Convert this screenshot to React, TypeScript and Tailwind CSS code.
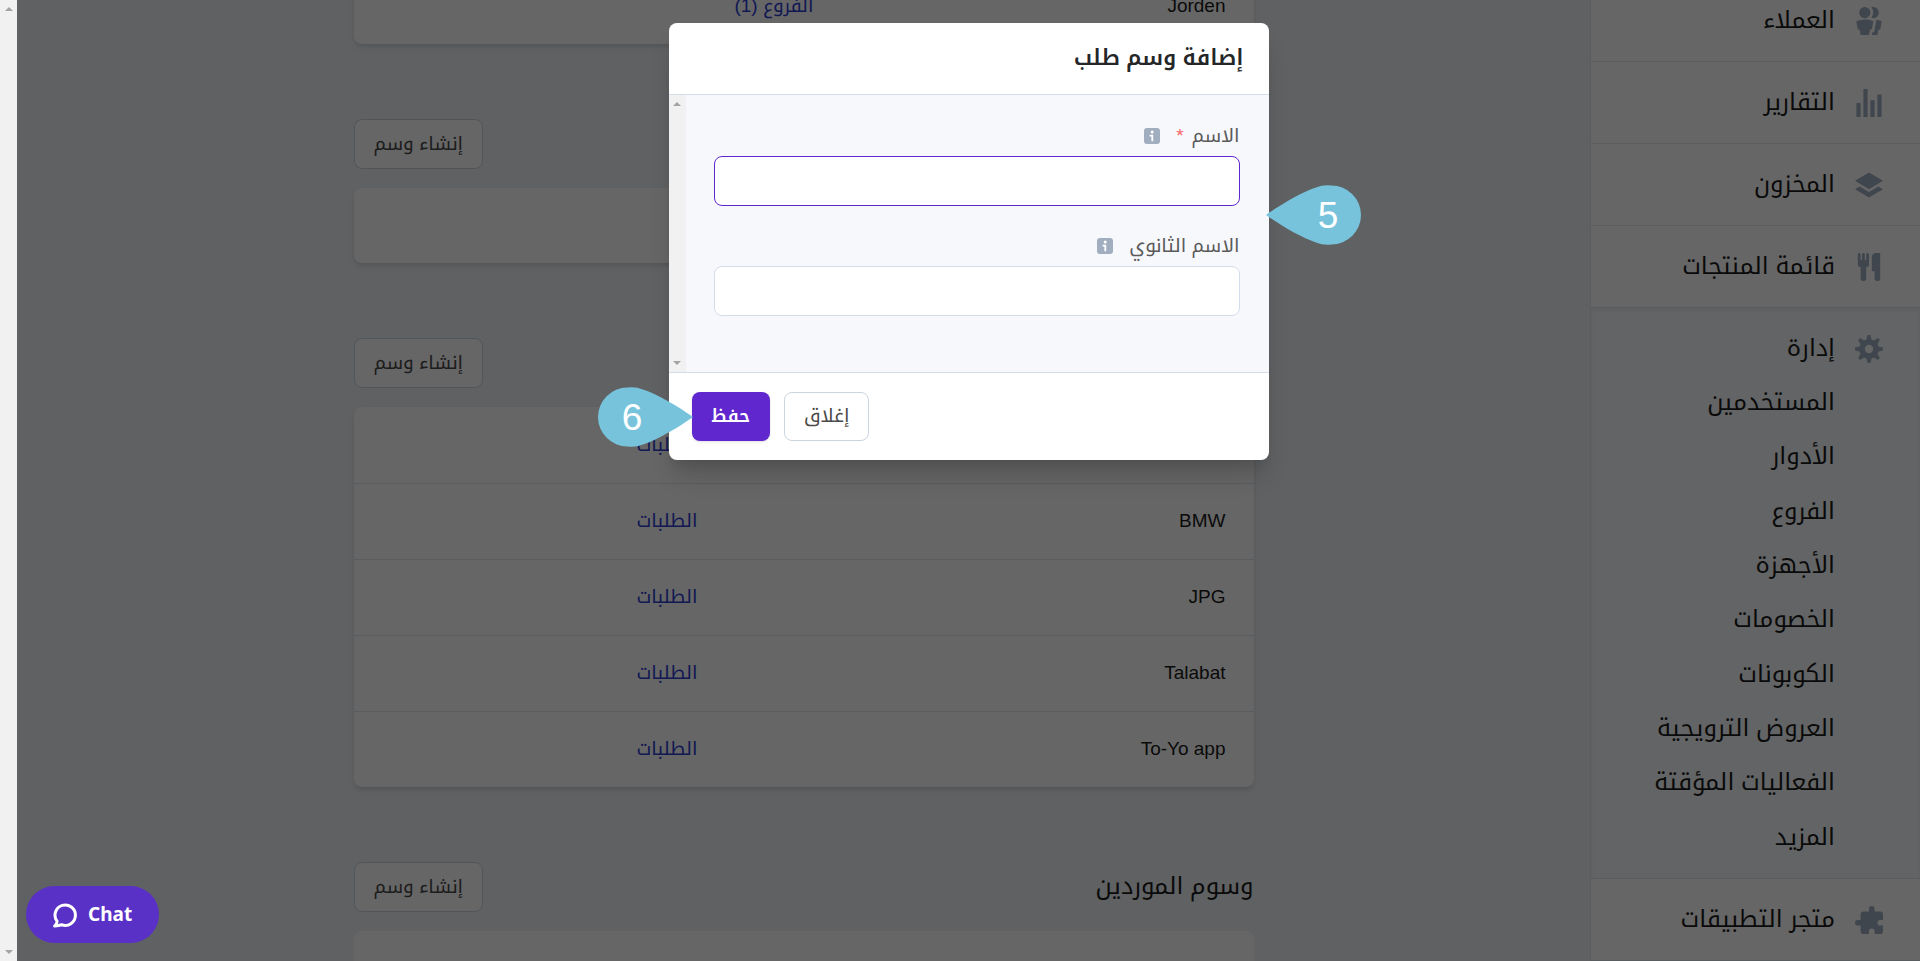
import { useId } from "react";

const kufi = "font-['Liberation_Sans','Noto_Kufi_Arabic',sans-serif]";

const icons = {
  customers:
    "M7 8a4 4 0 1 1 0-8 4 4 0 0 1 0 8zm0 1c2.15 0 4.2.4 6.1 1.09L12 16h-1.25L10 20H4l-.75-4H2L.9 10.09A17.93 17.93 0 0 1 7 9zm8.31.17c1.32.18 2.59.48 3.8.92L18 16h-1.25L16 20h-3.96l.37-2h1.25l1.65-8.83zM13 0a4 4 0 1 1-1.33 7.76 5.96 5.96 0 0 0 0-7.52C12.1.1 12.53 0 13 0z",
  reports: "M1 10h3v10H1V10zM6 0h3v20H6V0zm5 8h3v12h-3V8zm5-4h3v16h-3V4z",
  inventory: "M10 1l10 6-10 6L0 7l10-6zm6.67 10L20 13l-10 6-10-6 3.33-2L10 15l6.67-4z",
  menu: "M18 11v7a2 2 0 0 1-4 0v-5h-2V3a3 3 0 0 1 3-3h3v11zM4 10a2 2 0 0 1-2-2V1a1 1 0 0 1 2 0v4h1V1a1 1 0 0 1 2 0v4h1V1a1 1 0 0 1 2 0v7a2 2 0 0 1-2 2v8a2 2 0 0 1-4 0v-8z",
  manage:
    "M3.94 6.5L2.22 3.64l1.42-1.42L6.5 3.94c.52-.3 1.1-.54 1.7-.7L9 0h2l.8 3.24c.6.16 1.18.4 1.7.7l2.86-1.72 1.42 1.42-1.72 2.86c.3.52.54 1.1.7 1.7L20 9v2l-3.24.8c-.16.6-.4 1.18-.7 1.7l1.72 2.86-1.42 1.42-2.86-1.72c-.52.3-1.1.54-1.7.7L11 20H9l-.8-3.24c-.6-.16-1.18-.4-1.7-.7l-2.86 1.72-1.42-1.42 1.72-2.86c-.3-.52-.54-1.1-.7-1.7L0 11V9l3.24-.8c.16-.6.4-1.18.7-1.7zM10 13a3 3 0 1 0 0-6 3 3 0 0 0 0 6z",
  apps: "M20 14v4a2 2 0 0 1-2 2h-4v-2a2 2 0 0 0-2-2 2 2 0 0 0-2 2v2H6a2 2 0 0 1-2-2v-4H2a2 2 0 0 1-2-2 2 2 0 0 1 2-2h2V6c0-1.1.9-2 2-2h4V2a2 2 0 0 1 2-2 2 2 0 0 1 2 2v2h4a2 2 0 0 1 2 2v4h-2a2 2 0 0 0-2 2 2 2 0 0 0 2 2h2z",
};

type IconName = keyof typeof icons;

const topItems: { label: string; icon: IconName }[] = [
  { label: "العملاء", icon: "customers" },
  { label: "التقارير", icon: "reports" },
  { label: "المخزون", icon: "inventory" },
  { label: "قائمة المنتجات", icon: "menu" },
];

const manageItems = [
  "المستخدمين",
  "الأدوار",
  "الفروع",
  "الأجهزة",
  "الخصومات",
  "الكوبونات",
  "العروض الترويجية",
  "الفعاليات المؤقتة",
  "المزيد",
];

function NavLink({ label, icon }: { label: string; icon: IconName }) {
  return (
    <a href="#" className="flex h-[81px] items-center gap-5 pr-[37px]">
      <svg viewBox="0 0 20 20" className="size-7 shrink-0 fill-[#a0aec0]" aria-hidden="true">
        <path fillRule="evenodd" d={icons[icon]} />
      </svg>
      <span className="pb-0.5 leading-10">{label}</span>
    </a>
  );
}

function Sidebar() {
  return (
    <nav className="w-[330px] shrink-0 border-l border-[#e2e8f0] bg-white text-[24px] text-[#1a1a1a]">
      <ul className="-mt-5">
        {topItems.map((item) => (
          <li key={item.label} className="border-b border-[#e2e8f0]">
            <NavLink {...item} />
          </li>
        ))}
        <li className="border-b border-[#e2e8f0] bg-[#f7fafc] pb-3.5 shadow-[inset_0_2px_4px_rgba(0,0,0,0.06)]">
          <NavLink label="إدارة" icon="manage" />
          <ul className="-mt-3.5 flex h-[489px] flex-col">
            {manageItems.map((label) => (
              <li key={label} className="flex flex-1 items-center pr-[85px]">
                <a href="#" className="leading-10">{label}</a>
              </li>
            ))}
          </ul>
        </li>
        <li className="border-b border-[#e2e8f0]">
          <NavLink label="متجر التطبيقات" icon="apps" />
        </li>
      </ul>
    </nav>
  );
}

type Row = { name: string; link: string };

function TagTable({ rows, nameWidth = "w-[528px]" }: { rows: Row[]; nameWidth?: string }) {
  return (
    <div className="overflow-hidden rounded-lg bg-white shadow-[0_4px_6px_-1px_rgba(0,0,0,0.1),0_2px_4px_-1px_rgba(0,0,0,0.06)]">
      <table className="w-full border-collapse text-[19px]">
        <tbody>
          {rows.map((row, i) => (
            <tr key={i} className="h-[76px] border-b border-[#e2e8f0] last:border-b-0">
              <td className={`${nameWidth} px-7 text-[#1a1a1a]`}>{row.name}</td>
              <td className="px-7">
                <a href="#" className="text-[#2d3ed0]">{row.link}</a>
              </td>
            </tr>
          ))}
        </tbody>
      </table>
    </div>
  );
}

function SectionHeader({ title }: { title?: string }) {
  return (
    <header className="mt-[75px] mb-[19px] flex h-[50px] items-center justify-between">
      <h2 className="pb-0.5 text-[24px] leading-10 text-[#1a1a1a]">{title}</h2>
      <button
        type="button"
        className="h-full rounded-lg border border-[#cbd5e0] bg-white px-[19px] text-[19px] text-[#4a4a4a]"
      >
        إنشاء وسم
      </button>
    </header>
  );
}

function Arrow({ down = false }: { down?: boolean }) {
  return (
    <svg viewBox="0 0 8 4" className="h-1 w-2 fill-[#a3a3a3]" aria-hidden="true">
      <path d={down ? "M0 0h8L4 4z" : "M0 4h8L4 0z"} />
    </svg>
  );
}

function Field({ label, required = false }: { label: string; required?: boolean }) {
  const id = useId();
  return (
    <div>
      <div className="flex h-[41px] items-center gap-4 text-[19px] text-[#5a5a5a]">
        <label htmlFor={id} className="leading-8">
          {label}
          {required && <span className="mr-2 text-[#f56565]">*</span>}
        </label>
        <svg viewBox="0 0 16 16" className="size-4" aria-hidden="true">
          <rect width="16" height="16" rx="3" fill="#a0aec0" />
          <circle cx="8.2" cy="4" r="1.5" fill="#fff" />
          <path d="M5.6 6.8h3.6v6.4H7.4V8.6H5.6z" fill="#fff" />
        </svg>
      </div>
      <input
        id={id}
        type="text"
        className={`h-[50px] w-full rounded-lg border bg-white px-4 text-[19px] outline-none ${
          required ? "border-[#5f27cd]" : "border-[#d5dcea]"
        }`}
      />
    </div>
  );
}

function Pin({ number, flip = false }: { number: number; flip?: boolean }) {
  return (
    <svg viewBox="0 0 95 60" className="h-[60px] w-[95px]" aria-hidden="true">
      <g transform={flip ? "translate(95 0) scale(-1 1)" : undefined}>
        <path
          d="M0 30C14 20 36 7 50 2.500A29.500 29.500 0 0 1 65.500 0.500A29.500 29.500 0 0 1 65.500 59.500A29.500 29.500 0 0 1 50 57.500C36 53 14 40 0 30z"
          fill="#78c3dc"
        />
      </g>
      <text
        x={flip ? 34 : 62}
        y="43"
        textAnchor="middle"
        fontSize="37"
        fill="#fff"
        fontFamily="Liberation Sans, sans-serif"
      >
        {number}
      </text>
    </svg>
  );
}

function TagDialog() {
  return (
    <div
      role="dialog"
      aria-modal="true"
      aria-labelledby="dialog-title"
      className="relative mt-[23px] w-[600px] rounded-lg bg-white shadow-[0_20px_25px_-5px_rgba(0,0,0,0.16),0_10px_10px_-5px_rgba(0,0,0,0.08)]"
    >
      <header className="flex h-[72px] items-center border-b border-[#d5dcea] px-[25px] pb-0.5">
        <h1 id="dialog-title" className="text-[22px] leading-9 font-semibold text-[#242628]">
          إضافة وسم طلب
        </h1>
      </header>
      <div className="flex h-[277px] bg-[#f7f8fc]">
        <form className="flex flex-1 flex-col gap-[19px] pt-5 pr-[29px] pl-7">
          <Field label="الاسم" required />
          <Field label="الاسم الثانوي" />
        </form>
        <div className="flex w-[17px] flex-col items-center justify-between bg-[#f1f1f1] py-[7px]">
          <Arrow />
          <Arrow down />
        </div>
      </div>
      <footer className="flex h-[88px] items-center justify-end gap-3.5 border-t border-[#d5dcea] px-[23px] text-[19px]">
        <button type="button" className="h-[49px] rounded-lg border border-[#cbd5e0] bg-white px-[19px] text-[#4a4a4a]">
          إغلاق
        </button>
        <button type="button" className="h-[49px] rounded-lg bg-[#5f27cd] px-5 text-[18px] font-semibold text-white shadow-sm">
          حفظ
        </button>
      </footer>
      <div className="absolute top-[162px] -right-[92px]">
        <Pin number={5} />
      </div>
      <div className="absolute top-[364px] -left-[71px]">
        <Pin number={6} flip />
      </div>
    </div>
  );
}

export default function App() {
  return (
    <div dir="rtl" className={`relative flex h-screen overflow-hidden bg-[#edf2f7] ${kufi}`}>
      <Sidebar />
      <main className="flex-1">
        <div className="mx-auto -mt-8 w-[900px]">
          <TagTable nameWidth="w-[412px]" rows={[{ name: "Jorden", link: "الفروع (1)" }]} />
          <SectionHeader />
          <div className="h-[75px] rounded-lg bg-white shadow-[0_4px_6px_-1px_rgba(0,0,0,0.1),0_2px_4px_-1px_rgba(0,0,0,0.06)]" />
          <SectionHeader />
          <TagTable
            rows={[
              { name: "", link: "الطلبات" },
              { name: "BMW", link: "الطلبات" },
              { name: "JPG", link: "الطلبات" },
              { name: "Talabat", link: "الطلبات" },
              { name: "To-Yo app", link: "الطلبات" },
            ]}
          />
          <SectionHeader title="وسوم الموردين" />
          <div className="h-[75px] rounded-lg bg-white" />
        </div>
      </main>
      <div className="flex w-[17px] shrink-0 flex-col items-center justify-between bg-[#f1f1f1] py-[7px]">
        <Arrow />
        <Arrow down />
      </div>

      <div className="absolute inset-y-0 right-0 left-[17px] flex items-start justify-center bg-black/60">
        <TagDialog />
      </div>

      <button
        type="button"
        dir="ltr"
        className="absolute bottom-[18px] left-[26px] flex h-[57px] w-[133px] items-center gap-2.5 rounded-full bg-[#5a31c6] pl-[26px] font-['Noto_Sans',sans-serif] text-[19px] font-bold text-white"
      >
        <svg viewBox="0 0 26 26" className="size-[26px]" fill="none" stroke="#fff" strokeWidth="3" strokeLinecap="round" strokeLinejoin="round" aria-hidden="true">
          <path d="M5 19.200A10.200 10.200 0 1 1 9.600 22.700C8 23.200 4.800 23.800 2.600 24.100C4 22.800 5.200 21 5 19.200z" />
        </svg>
        Chat
      </button>
    </div>
  );
}
